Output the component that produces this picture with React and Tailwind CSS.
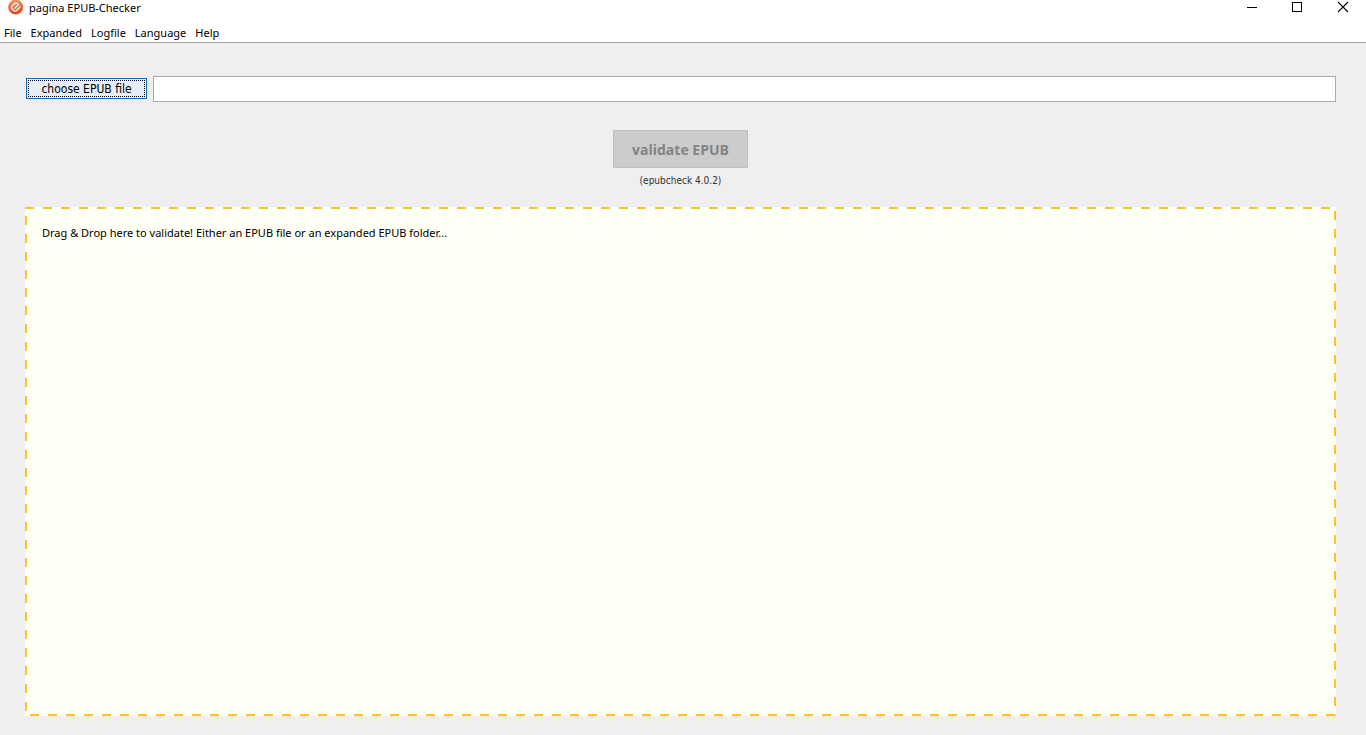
/**
 * App.jsx - EPUB checker main window
 *
 * Title bar, menu bar, file chooser and the drop zone for EPUB files.
 */

import { useRef, useState } from 'react';

const MENUS = ['File', 'Expanded', 'Logfile', 'Language', 'Help'];

function AppLogo() {
  return (
    <svg className="h-4 w-4" viewBox="0 0 16 16" aria-hidden="true">
      <defs>
        <linearGradient id="logoFill" x1="0" y1="0" x2="0" y2="1">
          <stop offset="0" stopColor="#f09a68" />
          <stop offset="1" stopColor="#d9481f" />
        </linearGradient>
      </defs>
      <circle cx="7.7" cy="7" r="7.6" fill="url(#logoFill)" />
      <path
        d="M6.6 8.2 L10.4 4.8 Q8.4 2 5.8 4.2 L3.9 6.2 Q2.9 7.6 4 9 L5.6 10.6 Q7 11.8 8.4 10.6 L12 7"
        fill="none"
        stroke="#fdeee4"
        strokeWidth="1.4"
        strokeLinecap="round"
        strokeLinejoin="round"
      />
    </svg>
  );
}

function TitleBar() {
  return (
    <header className="flex h-4 items-start justify-between pl-2">
      <div className="flex items-center gap-1">
        <AppLogo />
        <h1 className="pl-px text-[11px] leading-4">pagina EPUB-Checker</h1>
      </div>
      <div className="flex">
        <button type="button" aria-label="Minimize" className="flex h-4 w-[46px] items-center justify-center">
          <svg className="h-4 w-3" viewBox="0 0 12 16" shapeRendering="crispEdges">
            <path d="M2 7.5H12" stroke="#000" />
          </svg>
        </button>
        <button type="button" aria-label="Maximize" className="flex h-4 w-[46px] items-center justify-center">
          <svg className="h-4 w-3" viewBox="0 0 12 16" shapeRendering="crispEdges">
            <path d="M1.5 2.5h9v9h-9z" fill="none" stroke="#000" />
          </svg>
        </button>
        <button type="button" aria-label="Close" className="flex h-4 w-[46px] items-center justify-center">
          <svg className="h-4 w-3" viewBox="0 0 12 16">
            <path d="M1 2L11 12M11 2L1 12" stroke="#000" strokeWidth="1.1" />
          </svg>
        </button>
      </div>
    </header>
  );
}

function MenuBar() {
  return (
    <nav className="flex h-[27px] items-center gap-[9px] border-b border-[#a0a0a0] px-1 pt-2">
      {MENUS.map((menu) => (
        <button key={menu} type="button" className="text-[11px] leading-4">
          {menu}
        </button>
      ))}
    </nav>
  );
}

function DropZone({ onDrop }) {
  return (
    <section
      onDragOver={(e) => e.preventDefault()}
      onDrop={onDrop}
      className="relative flex-1 bg-[#fffff5] px-[17px] py-[18px]"
    >
      {/* Dashed frame: 9px dash, 9px gap */}
      <div className="absolute inset-x-0 top-0 h-0.5 bg-[repeating-linear-gradient(90deg,#f0c828_0_9px,transparent_9px_18px)]" />
      <div className="absolute top-1 right-0 bottom-0 w-0.5 bg-[repeating-linear-gradient(180deg,#fcc41c_0_9px,transparent_9px_18px)]" />
      <div className="absolute right-px bottom-0 left-0 h-0.5 bg-[repeating-linear-gradient(270deg,#fcc41c_0_9px,transparent_9px_18px)]" />
      <div className="absolute top-0 bottom-0 left-0 w-0.5 bg-[repeating-linear-gradient(180deg,transparent_0_9px,#f0c828_9px_18px)]" />
      <p className="text-[11px] leading-4">
        Drag &amp; Drop here to validate! Either an EPUB file or an expanded EPUB folder...
      </p>
    </section>
  );
}

export default function App() {
  const [path, setPath] = useState('');
  const fileRef = useRef(null);

  function handleDrop(e) {
    e.preventDefault();
    const file = e.dataTransfer.files[0];
    if (file) setPath(file.name);
  }

  return (
    <div className="flex min-h-screen flex-col bg-[#efefef] font-['Noto_Sans','Open_Sans',sans-serif] text-black">
      <div className="bg-white">
        <TitleBar />
        <MenuBar />
      </div>

      <main className="flex flex-1 flex-col pt-[33px] pr-[30px] pb-[19px] pl-[25px]">
        <div className="flex items-start gap-1.5 pl-px">
          <button
            type="button"
            onClick={() => fileRef.current.click()}
            className="mt-0.5 h-[21px] w-[121px] border border-[#0f6cbd] bg-[#e5edf7] p-px font-['DejaVu_Sans_Condensed','DejaVu_Sans',sans-serif] text-[12px] leading-[17px]"
          >
            <span className="block h-[17px] border border-dotted border-black">choose EPUB file</span>
          </button>
          <input ref={fileRef} type="file" accept=".epub" className="hidden" />
          <input
            type="text"
            aria-label="EPUB file path"
            value={path}
            onChange={(e) => setPath(e.target.value)}
            className="h-[26px] min-w-0 flex-1 border border-[#ababab] bg-white px-1 text-[12px] outline-none"
          />
        </div>

        <div className="flex flex-col items-center pt-7 pb-[18px]">
          <button
            type="button"
            disabled
            className="h-[38px] w-[135px] border border-[#bfbfbf] bg-[#cccccc] font-['Open_Sans','Noto_Sans',sans-serif] text-[14px] font-bold text-[#838383]"
          >
            validate EPUB
          </button>
          <p className="pt-[5px] font-['DejaVu_Sans_Condensed','DejaVu_Sans',sans-serif] text-[10px] leading-4 text-[#333333]">
            (epubcheck 4.0.2)
          </p>
        </div>

        <DropZone onDrop={handleDrop} />
      </main>
    </div>
  );
}
